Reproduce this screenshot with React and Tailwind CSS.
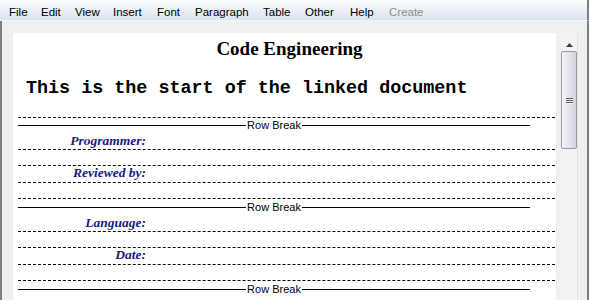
const menuItems = [
  { label: "File", w: "w-[32px]" },
  { label: "Edit", w: "w-[34px]" },
  { label: "View", w: "w-[38px]" },
  { label: "Insert", w: "w-[44px]" },
  { label: "Font", w: "w-[38px]" },
  { label: "Paragraph", w: "w-[68px]" },
  { label: "Table", w: "w-[42px]" },
  { label: "Other", w: "w-[45px]" },
  { label: "Help", w: "w-[39px]" },
];

const serif = "font-['Liberation_Serif','Times_New_Roman',serif]";
const labelCls = `${serif} text-[13.5px] font-bold italic text-[#1a1a80] w-[128px] text-right`;

function RowBreak({ className = "" }) {
  return (
    <div className={`flex items-center w-[512px] h-[13px] ${className}`}>
      <div className="flex-1 h-px bg-black" />
      <span className="px-px text-[11px] leading-[13px] text-black font-['Liberation_Sans',Arial,sans-serif]">
        Row Break
      </span>
      <div className="flex-1 h-px bg-black" />
    </div>
  );
}

function Dashed({ className = "" }) {
  return <div className={`w-[537px] border-t border-dashed border-black ${className}`} />;
}

export default function App() {
  return (
    <div className="w-[589px] h-[300px] flex flex-col bg-[#f0f0f0] overflow-hidden font-['Liberation_Sans',Arial,sans-serif]">
      {/* Menu bar */}
      <div className="h-[21px] flex pl-[9px] bg-gradient-to-b from-[#fcfdfe] to-[#dce3f0] border-b border-[#f4f6fa] border-r-2 border-r-[#7b7f86]">
        {menuItems.map((m) => (
          <span key={m.label} className={`${m.w} h-[20px] text-[11.5px] leading-[24px] text-black`}>
            {m.label}
          </span>
        ))}
        <span className="h-[20px] text-[11.5px] leading-[24px] text-[#8c8c8c]">Create</span>
      </div>

      {/* Body */}
      <div className="flex-1 flex border-l-2 border-r-2 border-[#7b7f86] pt-[12px] pl-[11px] min-h-0">
        {/* Document */}
        <div className="w-[543px] bg-white flex flex-col pl-[5px]">
          <div className={`${serif} mt-[5px] h-[22px] leading-[22px] text-[19px] font-bold text-black text-center pl-[5px]`}>
            Code Engineering
          </div>
          <div className="mt-[18px] h-[22px] leading-[22px] pl-[8px] text-[18.4px] font-bold text-black whitespace-pre font-['Liberation_Mono','Courier_New',monospace]">
            This is the start of the linked document
          </div>

          <Dashed className="mt-[17px]" />
          <RowBreak className="mt-[1px]" />
          <div className="w-[537px] h-[18px] border-b border-dashed border-black">
            <div className={`${labelCls} leading-[17px]`}>Programmer:</div>
          </div>
          <div className="mt-[15px] w-[537px] h-[18px] border-y border-dashed border-black">
            <div className={`${labelCls} leading-[14px]`}>Reviewed by:</div>
          </div>
          <Dashed className="mt-[15px]" />
          <RowBreak className="mt-[2px]" />
          <div className="w-[537px] h-[18px] border-b border-dashed border-black">
            <div className={`${labelCls} leading-[17px]`}>Language:</div>
          </div>
          <div className="mt-[15px] w-[537px] h-[18px] border-y border-dashed border-black">
            <div className={`${labelCls} leading-[14px]`}>Date:</div>
          </div>
          <Dashed className="mt-[15px]" />
          <RowBreak className="mt-[2px]" />
        </div>

        {/* Scrollbar */}
        <div className="ml-[5px] w-[17px] bg-[#f3f3f3] border-r border-[#e2e2e2] flex flex-col items-start">
          <div className="h-[18px] w-[16px] flex items-end justify-center pb-[4px]">
            <svg width="7" height="4" viewBox="0 0 7 4">
              <polygon points="3.5,0 7,4 0,4" fill="#3c3c3c" />
            </svg>
          </div>
          <div className="w-[16px] h-[98px] rounded-[2px] border border-[#9d99a2] bg-gradient-to-r from-[#f3f3f5] via-[#e4e6ea] to-[#cfd3db] flex flex-col items-center justify-center gap-[1px]">
            <div className="w-[7px] h-px bg-[#56585c] shadow-[0_1px_0_#f6f6f6]" />
            <div className="w-[7px] h-px bg-[#56585c] shadow-[0_1px_0_#f6f6f6]" />
            <div className="w-[7px] h-px bg-[#56585c] shadow-[0_1px_0_#f6f6f6]" />
          </div>
        </div>
      </div>
    </div>
  );
}
